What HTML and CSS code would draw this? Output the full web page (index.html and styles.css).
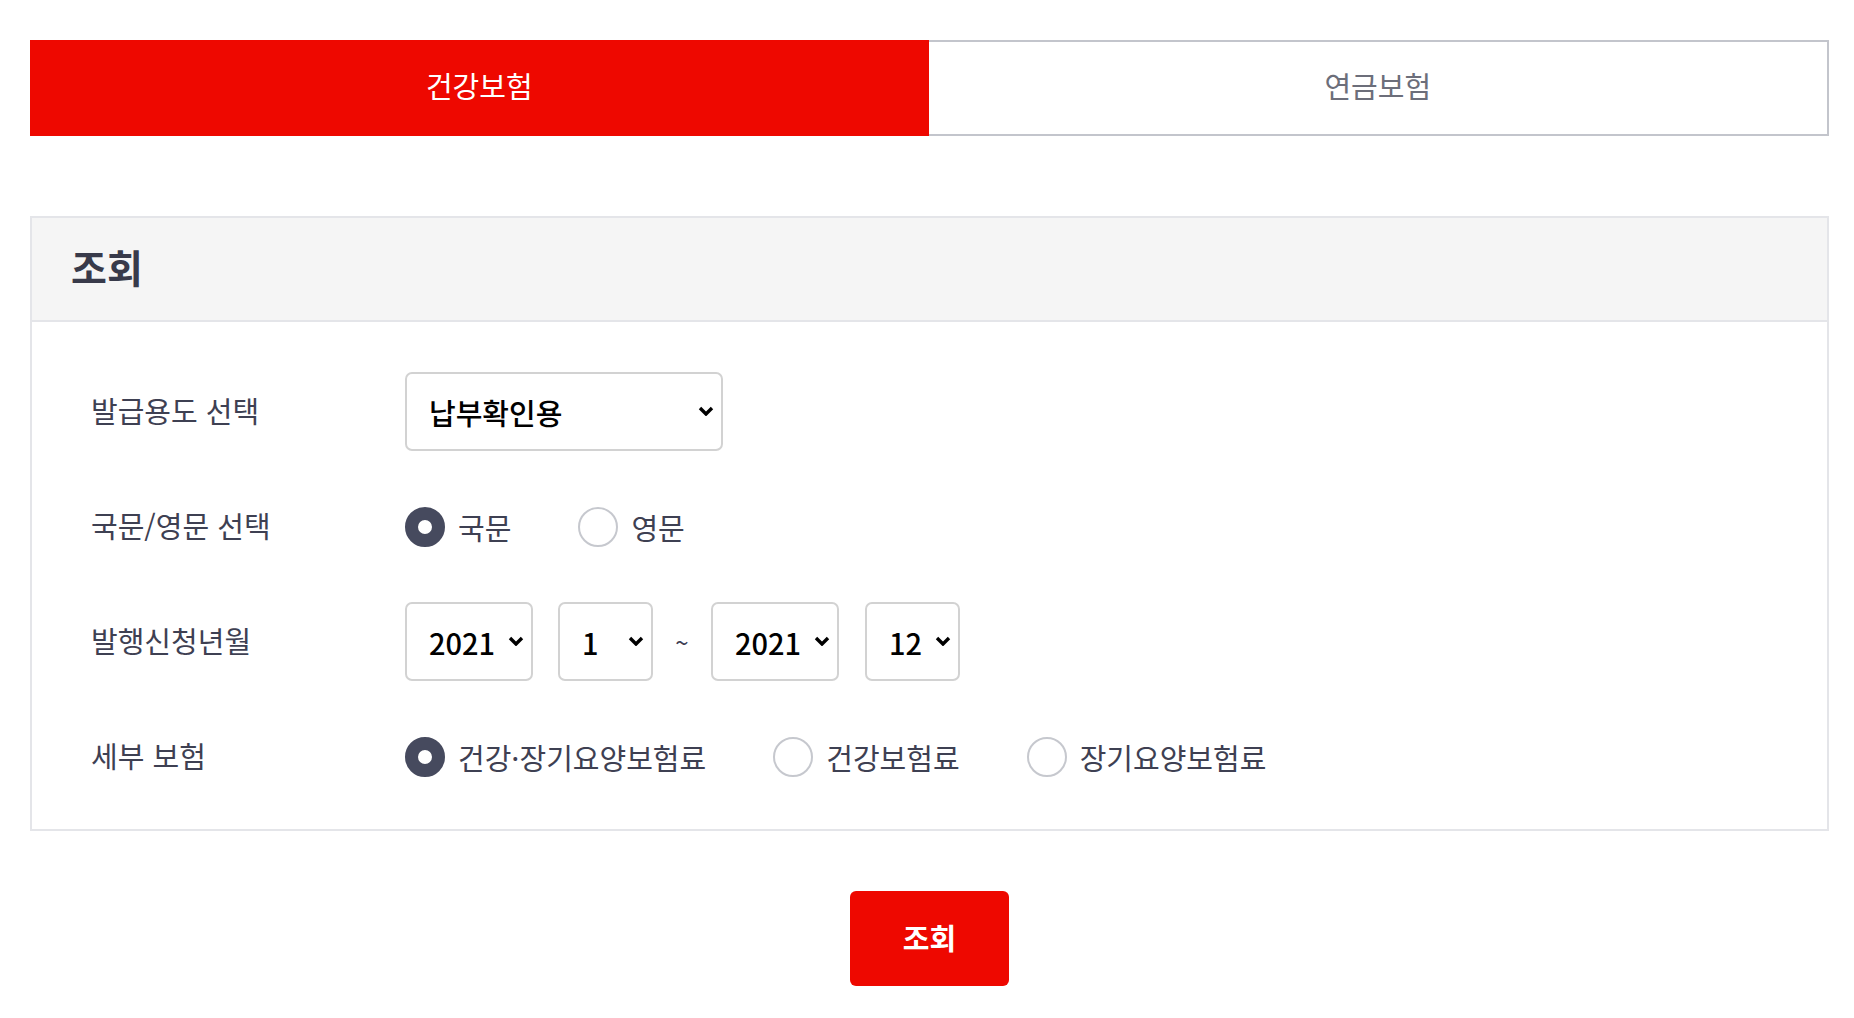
FILE: index.html
```html
<!DOCTYPE html>
<html lang="ko">
<head>
<meta charset="utf-8">
<title>조회</title>
<link rel="stylesheet" href="styles.css">
</head>
<body>
<div class="wrap">
  <div class="tabs">
    <div class="tab tab-active">건강보험</div>
    <div class="tab tab-idle">연금보험</div>
  </div>

  <section class="panel">
    <div class="panel-head"><h2 class="panel-title">조회</h2></div>
    <div class="panel-body">
      <div class="row">
        <div class="label">발급용도 선택</div>
        <div class="controls">
          <span class="sel sel-purpose">
            <select class="select"><option>납부확인용</option></select>
            <svg class="chev" viewBox="0 0 16 10"><path d="M2 2l6 6 6-6"/></svg>
          </span>
        </div>
      </div>

      <div class="row">
        <div class="label">국문/영문 선택</div>
        <div class="controls">
          <label class="radio"><span class="dot dot-on"></span><span class="rtext">국문</span></label>
          <label class="radio"><span class="dot"></span><span class="rtext">영문</span></label>
        </div>
      </div>

      <div class="row">
        <div class="label">발행신청년월</div>
        <div class="controls dates">
          <span class="sel sel-year">
            <select class="select"><option>2021</option></select>
            <svg class="chev" viewBox="0 0 16 10"><path d="M2 2l6 6 6-6"/></svg>
          </span>
          <span class="sel sel-month">
            <select class="select"><option>1</option></select>
            <svg class="chev" viewBox="0 0 16 10"><path d="M2 2l6 6 6-6"/></svg>
          </span>
          <span class="tilde">~</span>
          <span class="sel sel-year">
            <select class="select"><option>2021</option></select>
            <svg class="chev" viewBox="0 0 16 10"><path d="M2 2l6 6 6-6"/></svg>
          </span>
          <span class="sel sel-month">
            <select class="select"><option>12</option></select>
            <svg class="chev" viewBox="0 0 16 10"><path d="M2 2l6 6 6-6"/></svg>
          </span>
        </div>
      </div>

      <div class="row">
        <div class="label">세부 보험</div>
        <div class="controls">
          <label class="radio"><span class="dot dot-on"></span><span class="rtext">건강·장기요양보험료</span></label>
          <label class="radio"><span class="dot"></span><span class="rtext">건강보험료</span></label>
          <label class="radio"><span class="dot"></span><span class="rtext">장기요양보험료</span></label>
        </div>
      </div>
    </div>
  </section>

  <div class="actions">
    <button class="btn" type="button">조회</button>
  </div>
</div>
</body>
</html>
```

FILE: styles.css
```css
* { box-sizing: border-box; }

body {
  margin: 0;
  background: #fff;
  font-family: "Noto Sans CJK KR", "Noto Sans", sans-serif;
  color: #3e4052;
}

.wrap {
  padding: 40px 25px 0 30px;
}

.tabs {
  display: flex;
  height: 96px;
}

.tab {
  flex: 1;
  display: flex;
  align-items: center;
  justify-content: center;
  font-size: 29px;
  padding-bottom: 6px;
}

.tab-active {
  background: #ee0800;
  color: #fff;
}

.tab-idle {
  background: #fff;
  color: #6c6e7a;
  border: 2px solid #c3c5cc;
  border-left: none;
}

.panel {
  margin-top: 80px;
  border: 2px solid #e4e5e9;
}

.panel-head {
  height: 104px;
  background: #f5f5f5;
  border-bottom: 2px solid #e4e5e9;
  display: flex;
  align-items: center;
  padding: 0 0 6px 39px;
}

.panel-title {
  margin: 0;
  font-size: 39px;
  font-weight: 700;
  color: #383a4a;
}

.panel-body {
  padding: 50px 0 33px 59px;
  display: flex;
  flex-direction: column;
  gap: 36px;
}

.row {
  display: flex;
  align-items: center;
  height: 79px;
}

.label {
  width: 314px;
  flex: none;
  font-size: 29px;
  color: #3e4052;
  padding-bottom: 3px;
}

.controls {
  display: flex;
  align-items: center;
}

.sel {
  position: relative;
  display: block;
  height: 79px;
}

.sel-purpose { width: 318px; }
.sel-year { width: 128px; }
.sel-month { width: 95px; }

.select {
  appearance: none;
  -webkit-appearance: none;
  width: 100%;
  height: 100%;
  border: 2px solid #d2d2d2;
  border-radius: 7px;
  background: #fff;
  padding: 0 0 0 22px;
  font-family: "Noto Sans CJK KR", "Noto Sans", sans-serif;
  font-size: 29px;
  font-weight: 500;
  color: #000;
}

.chev {
  position: absolute;
  right: 9px;
  top: 34px;
  width: 16px;
  height: 10px;
  pointer-events: none;
}

.chev path {
  fill: none;
  stroke: #000;
  stroke-width: 3.4;
}

.dates .sel-year:first-child + .sel-month { margin-left: 25px; }

.tilde {
  width: 58px;
  text-align: center;
  font-size: 24px;
  color: #3e4052;
}

.dates .tilde + .sel-year + .sel-month { margin-left: 26px; }

.radio {
  display: flex;
  align-items: center;
  margin-right: 67px;
}

.dot {
  width: 40px;
  height: 40px;
  border-radius: 50%;
  border: 2px solid #c6c8ce;
  background: #fff;
  flex: none;
}

.dot-on {
  border: 13px solid #464a5e;
  background: #fff;
}

.rtext {
  margin-left: 13px;
  font-size: 29px;
  color: #3e4052;
}

.actions {
  display: flex;
  justify-content: center;
  margin-top: 60px;
}

.btn {
  width: 159px;
  height: 95px;
  border: none;
  border-radius: 6px;
  background: #ee0800;
  color: #fff;
  font-family: "Noto Sans CJK KR", "Noto Sans", sans-serif;
  font-size: 29px;
  font-weight: 700;
  padding-bottom: 4px;
}
```
